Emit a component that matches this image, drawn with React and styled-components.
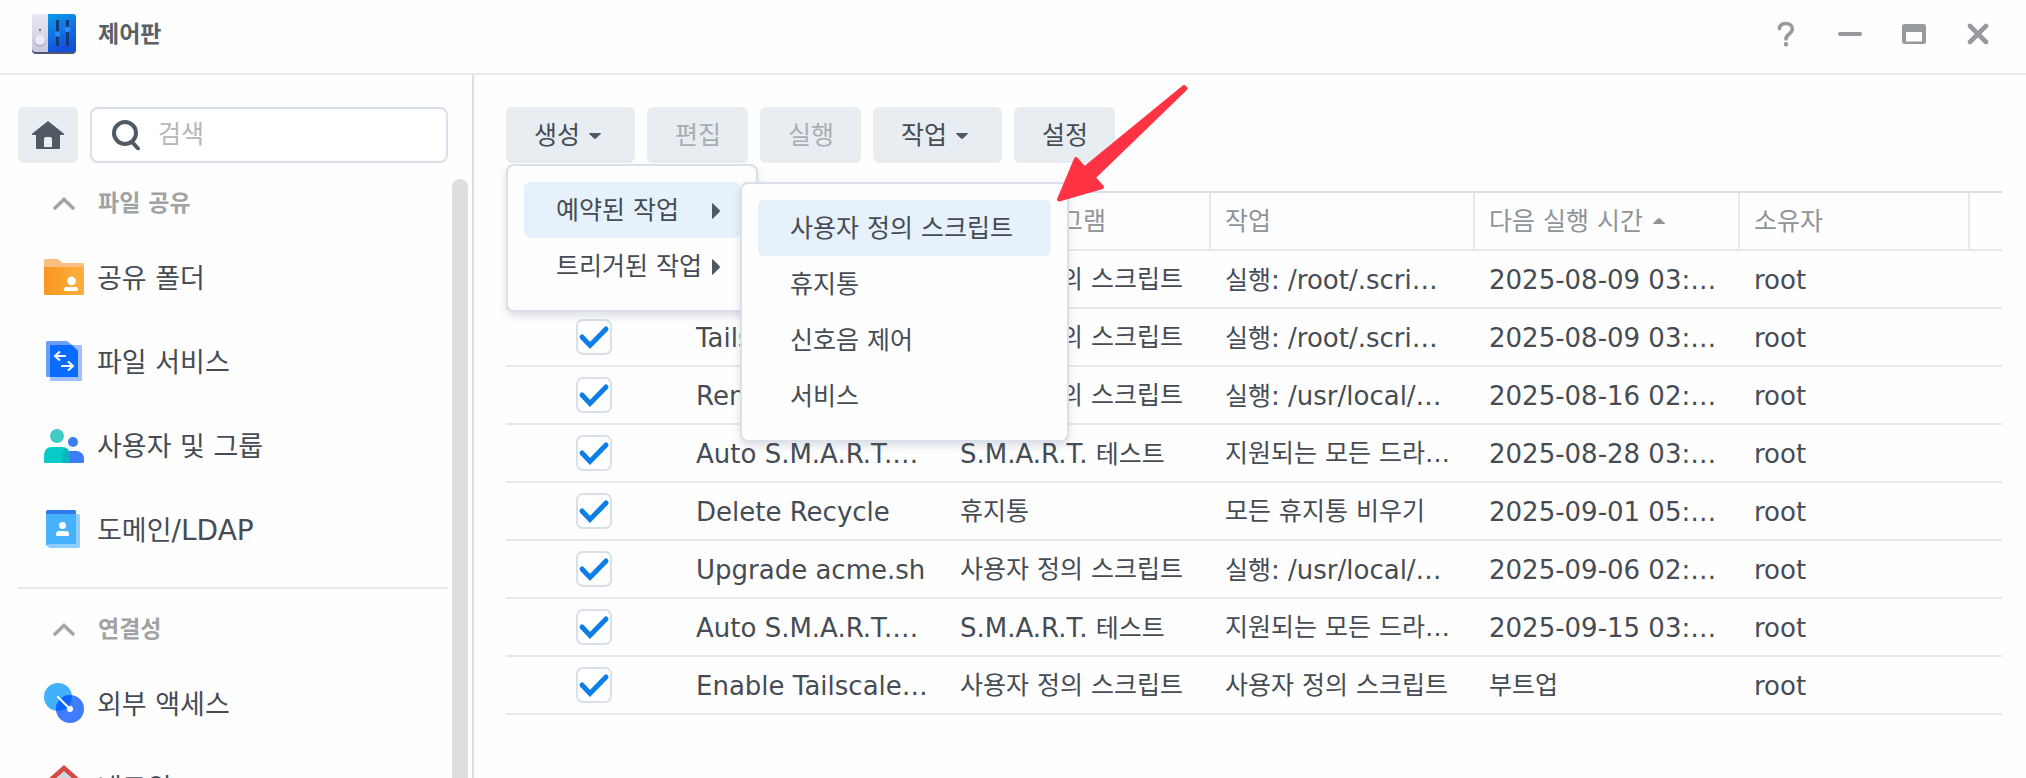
import React, { useState } from 'react';
import styled, { createGlobalStyle } from 'styled-components';

const colors = {
  text: '#454c54',
  icon: '#505a64',
  muted: '#8f9499',
  faint: '#a9adb1',
  control: '#e8edf2',
  border: '#d9e0e9',
  line: '#e6e8eb',
  hover: '#e6f1fc',
  blue: '#0c7fe6',
};

const GlobalStyle = createGlobalStyle`
  * {
    box-sizing: border-box;
  }
  body {
    margin: 0;
    background: #fefefe;
    color: ${colors.text};
    font-family: 'DejaVu Sans', 'Noto Sans CJK KR', sans-serif;
    font-size: 25px;
    line-height: 32px;
  }
  button, input {
    font: inherit;
    color: inherit;
  }
  button {
    border: 0;
    padding: 0;
    background: none;
    cursor: pointer;
  }
  ul {
    list-style: none;
    margin: 0;
    padding: 0;
  }
`;

const Window = styled.div`
  display: flex;
  flex-direction: column;
  height: 100vh;
  overflow: hidden;
`;

const TitleBar = styled.header`
  display: flex;
  align-items: center;
  height: 75px;
  flex-shrink: 0;
  padding: 0 16px 6px 32px;
  border-bottom: 2px solid ${colors.line};
`;

const Title = styled.h1`
  flex: 1;
  margin: 0 0 0 22px;
  font-size: 23px;
  line-height: 32px;
  font-weight: 700;
  color: #5b6066;
`;

const WindowButton = styled.button`
  display: flex;
  align-items: center;
  justify-content: center;
  width: 64px;
  height: 48px;
  color: #969a9f;
`;

const Body = styled.div`
  display: flex;
  flex: 1;
  min-height: 0;
`;

const Sidebar = styled.aside`
  display: flex;
  flex-direction: column;
  width: 474px;
  flex-shrink: 0;
  border-right: 2px solid ${colors.border};
`;

const SearchRow = styled.div`
  display: flex;
  gap: 12px;
  padding: 32px 24px 0 18px;
`;

const HomeButton = styled.button`
  display: flex;
  align-items: center;
  justify-content: center;
  flex-shrink: 0;
  width: 60px;
  height: 56px;
  border-radius: 6px;
  background: ${colors.control};
`;

const SearchBox = styled.label`
  display: flex;
  align-items: center;
  flex: 1;
  min-width: 0;
  gap: 18px;
  height: 56px;
  padding: 0 20px;
  border: 2px solid ${colors.border};
  border-radius: 8px;
  background: #fff;

  svg {
    flex-shrink: 0;
  }
`;

const SearchInput = styled.input`
  flex: 1;
  min-width: 0;
  padding: 0;
  border: 0;
  outline: 0;
  background: none;

  &::placeholder {
    color: #b4b6b8;
    opacity: 1;
  }
`;

const NavArea = styled.div`
  display: flex;
  flex: 1;
  min-height: 0;
  gap: 4px;
  padding: 0 4px 0 18px;
`;

const Nav = styled.nav`
  flex: 1;
  padding-top: 8px;
  overflow: hidden;
`;

const ScrollThumb = styled.div`
  width: 16px;
  margin-top: 16px;
  border-radius: 8px 8px 0 0;
  background: #dedede;
`;

const NavSection = styled.section`
  & + & {
    margin-top: 16px;
    padding-top: 8px;
    border-top: 2px solid #eaeaec;
  }
`;

const SectionButton = styled.button`
  display: flex;
  align-items: center;
  gap: 22px;
  width: 100%;
  height: 64px;
  padding-left: 34px;
  font-size: 23px;
  font-weight: 700;
  color: #a0a2a4;
`;

const NavLink = styled.a`
  display: flex;
  align-items: center;
  gap: 13px;
  height: 84px;
  padding-left: 26px;
  font-size: 27px;
  color: inherit;
  text-decoration: none;
`;

const NavLabel = styled.span`
  padding-top: 3px;
`;

const Main = styled.main`
  flex: 1;
  min-width: 0;
  padding: 32px 24px 0 32px;
`;

const Toolbar = styled.div`
  display: flex;
  gap: 12px;
  margin-bottom: 28px;
`;

const ToolbarItem = styled.div`
  position: relative;
`;

const ToolButton = styled.button`
  display: flex;
  align-items: center;
  gap: 9px;
  height: 56px;
  padding: 2px ${({ $caret }) => ($caret ? '34px' : '27px')} 0 28px;
  border-radius: 6px;
  background: ${colors.control};
  white-space: nowrap;

  &:disabled {
    color: ${colors.faint};
    cursor: default;
  }
`;

const Menu = styled.ul`
  position: absolute;
  z-index: ${({ $nested }) => ($nested ? 3 : 2)};
  top: ${({ $nested }) => ($nested ? '0' : 'calc(100% + 1px)')};
  left: ${({ $nested }) => ($nested ? '100%' : '0')};
  width: ${({ $nested }) => ($nested ? '329px' : '252px')};
  padding: 16px;
  border: 2px solid ${colors.border};
  border-radius: 8px;
  background: #fefefe;
  box-shadow: 0 4px 8px rgba(60, 80, 110, 0.18);
`;

const MenuEntry = styled.li`
  position: relative;
`;

const MenuButton = styled.button`
  display: flex;
  align-items: center;
  justify-content: space-between;
  width: 100%;
  height: 56px;
  padding: 2px 20px 0 32px;
  border-radius: 6px;
  background: ${({ $active }) => ($active ? colors.hover : 'transparent')};
  text-align: left;
  white-space: nowrap;
`;

const Table = styled.table`
  width: 100%;
  table-layout: fixed;
  border-collapse: separate;
  border-spacing: 0;
  border-top: 2px solid #dcdee0;
`;

const HeaderCell = styled.th`
  height: 58px;
  padding: 2px 0 0 14px;
  border-right: ${({ $last }) => ($last ? '0' : `2px solid ${colors.line}`)};
  border-bottom: 2px solid ${colors.line};
  font-weight: 400;
  color: ${colors.muted};
  text-align: left;
  white-space: nowrap;
`;

const SortMark = styled.svg`
  margin-left: 10px;
  vertical-align: 6px;
`;

const Cell = styled.td`
  height: 58px;
  padding: 2px 0 0 14px;
  border-bottom: 2px solid ${colors.line};
  overflow: hidden;
  white-space: nowrap;
`;

const CheckCell = styled(Cell)`
  padding: 0;
`;

const CheckWrapper = styled.label`
  position: relative;
  display: block;
  width: 36px;
  height: 36px;
  margin: 0 auto;

  svg {
    position: absolute;
    inset: 0;
    pointer-events: none;
  }
`;

const CheckInput = styled.input`
  display: block;
  appearance: none;
  width: 36px;
  height: 36px;
  margin: 0;
  border: 2px solid ${colors.border};
  border-radius: 7px;
  background: #fff;

  &:not(:checked) + svg {
    display: none;
  }
`;

const Latin = styled.span`
  font-size: ${({ $large }) => ($large ? '28px' : '26px')};
`;

// lies over the page, so it must not catch clicks
const PointerArrow = styled.svg`
  position: absolute;
  z-index: 5;
  top: 80px;
  left: 1050px;
  pointer-events: none;
`;

// Latin letters are set a little larger than the Hangul beside them
const Text = ({ children, large }) =>
  children
    .split(/([^\u1100-\uffff]*[!-~][^\u1100-\uffff]*…?)/)
    .filter(Boolean)
    .map((part, i) =>
      /[!-~]/.test(part) ? (
        <Latin key={i} $large={large}>
          {part}
        </Latin>
      ) : (
        part
      ),
    );

const AppLogo = () => (
  <svg width="44" height="40" viewBox="0 0 44 40" aria-hidden="true">
    <defs>
      <linearGradient id="panelBlue" x1="0" y1="0" x2="0.3" y2="1">
        <stop offset="0" stopColor="#0c9be8" />
        <stop offset="1" stopColor="#1450dc" />
      </linearGradient>
      <linearGradient id="panelGrey" x1="0" y1="0" x2="0" y2="1">
        <stop offset="0" stopColor="#e9e8f6" />
        <stop offset="1" stopColor="#c9c8dc" />
      </linearGradient>
    </defs>
    <rect y="4" width="44" height="36" rx="4" fill="#4c5878" />
    <path d="M3 0H16V38H4a4 4 0 0 1-4-4V3a3 3 0 0 1 3-3Z" fill="url(#panelGrey)" />
    <path d="M16 0H41a3 3 0 0 1 3 3V34a4 4 0 0 1-4 4H16Z" fill="url(#panelBlue)" />
    <path d="M25.500 6V32M35.500 6V32" stroke="#123c78" strokeWidth="3" />
    <circle cx="25.500" cy="20" r="2.700" fill="#2e8df2" />
    <circle cx="35.500" cy="15.500" r="2.700" fill="#2e8df2" />
    <circle cx="8" cy="16" r="1.200" fill="#777b90" />
    <circle cx="8" cy="27" r="5.500" fill="#adaec4" />
    <circle cx="8" cy="26" r="5" fill="#ebeaf8" />
  </svg>
);

const HelpIcon = () => (
  <svg width="18" height="26" viewBox="0 0 18 26" aria-hidden="true">
    <path
      d="M2.500 7.500C2.800 4 5.500 2.500 9 2.500c3.800 0 6.300 2.200 6.300 5.500 0 5-6.300 5-6.300 10"
      fill="none"
      stroke="currentColor"
      strokeWidth="3.600"
      strokeLinecap="round"
    />
    <circle cx="9" cy="23.200" r="2.200" fill="currentColor" />
  </svg>
);

const MinimizeIcon = () => (
  <svg width="24" height="24" viewBox="0 0 24 24" aria-hidden="true">
    <rect y="10" width="24" height="4" rx="2" fill="currentColor" />
  </svg>
);

const MaximizeIcon = () => (
  <svg width="24" height="20" viewBox="0 0 24 20" aria-hidden="true">
    <path
      fillRule="evenodd"
      d="M2.500 0h19A2.500 2.500 0 0 1 24 2.500v15a2.500 2.500 0 0 1-2.500 2.500h-19A2.500 2.500 0 0 1 0 17.500v-15A2.500 2.500 0 0 1 2.500 0ZM4 8v9.500h16V8Z"
      fill="currentColor"
    />
  </svg>
);

const CloseIcon = () => (
  <svg width="22" height="22" viewBox="0 0 22 22" aria-hidden="true">
    <path d="M3 3 19 19M19 3 3 19" stroke="currentColor" strokeWidth="4.600" strokeLinecap="round" />
  </svg>
);

const HomeIcon = () => (
  <svg width="34" height="28" viewBox="0 0 34 28" fill={colors.icon} aria-hidden="true">
    <path
      fillRule="evenodd"
      d="M17 0 33 12.800q.6.900-.6 1.200H29V27q0 1-1 1H6q-1 0-1-1V14H1.600Q.4 13.700 1 12.800ZM15 16q-2 0-2 2v8h8v-8q0-2-2-2Z"
    />
  </svg>
);

const SearchIcon = () => (
  <svg width="28" height="30" viewBox="0 0 28 30" fill="none" stroke={colors.icon} aria-hidden="true">
    <circle cx="13" cy="13" r="11" strokeWidth="4" />
    <path d="m20.500 22.500 5.500 6" strokeWidth="4" strokeLinecap="round" />
  </svg>
);

const ChevronIcon = () => (
  <svg width="24" height="14" viewBox="0 0 24 14" fill="none" aria-hidden="true">
    <path d="M3 12 12 3.500 21 12" stroke="#a3a5a8" strokeWidth="3.600" strokeLinecap="round" />
  </svg>
);

const CaretDown = () => (
  <svg width="12" height="6" viewBox="0 0 12 6" aria-hidden="true">
    <path d="M.6 0h10.800q1 .2.300 1L7 5.600q-1 .8-2 0L.3 1Q-.4.200.600 0Z" fill={colors.icon} />
  </svg>
);

const CaretRight = () => (
  <svg width="8" height="16" viewBox="0 0 8 16" aria-hidden="true">
    <path d="M0 .8Q0-.3 1 .4L7.500 7q.8 1 0 2L1 15.600q-1 .7-1-.4Z" fill={colors.icon} />
  </svg>
);

const FolderIcon = () => (
  <svg width="40" height="40" viewBox="0 0 40 40" aria-hidden="true">
    <defs>
      <linearGradient id="folder" x1="0" y1="0" x2="1" y2="0">
        <stop offset="0" stopColor="#f8961f" />
        <stop offset="1" stopColor="#fbb040" />
      </linearGradient>
    </defs>
    <path d="M1.500 2H13q2 0 3 1.500L18 6H38.500Q40 6 40 7.500V13H0V3.500Q0 2 1.500 2Z" fill="#f9be82" />
    <path d="M0 10H40V36.500q0 1.500-1.500 1.500h-37Q0 38 0 36.500Z" fill="url(#folder)" />
    <circle cx="27.500" cy="24" r="4.400" fill="#fff" />
    <path d="M20 33v-1q0-2 2-2H32q2 0 2 2v1q0 1-1 1H21q-1 0-1-1Z" fill="#fff" />
  </svg>
);

const FileServiceIcon = () => (
  <svg width="40" height="40" viewBox="0 0 40 40" aria-hidden="true">
    <path d="M6 4H36.500Q38 4 38 5.500V38.500Q38 40 36.500 40H7.500Q6 40 6 38.500Z" fill="#a3bffa" />
    <path d="M3.500 0H23L34 9V36H3.500Q2 36 2 34.500V1.500Q2 0 3.500 0Z" fill="#6c9df8" />
    <path d="M6 4H28l6 6V36H6Z" fill="#0a6cff" />
    <path
      d="M22 15H11m5-4.500L11 15l5 4.500M17 25H29m-5-4.500L29 25l-5 4.500"
      fill="none"
      stroke="#fff"
      strokeWidth="2"
    />
  </svg>
);

const UsersIcon = () => (
  <svg width="40" height="40" viewBox="0 0 40 40" aria-hidden="true">
    <circle cx="29" cy="17" r="5" fill="#3c7df8" />
    <path d="M20 26H33q7 1 7 8v2.500q0 1.500-1.500 1.500H20Z" fill="#3d7bfa" />
    <circle cx="13" cy="11" r="7" fill="#3fcac2" />
    <path d="M8 22H18q8 0 8 9v7H1.500Q0 38 0 36.500V31q0-9 8-9Z" fill="#06cbc6" />
    <path d="M21 23q5 2 5 8v7H18q-1-10 3-15Z" fill="#08b8bd" />
  </svg>
);

const DomainIcon = () => (
  <svg width="40" height="40" viewBox="0 0 40 40" aria-hidden="true">
    <rect x="4" y="5" width="32" height="34" rx="2" fill="#8fcdff" />
    <path d="M4 1H31Q32 1 32 2.500V12H2V3Q2 1 4 1Z" fill="#2f7dec" />
    <path d="M2 5H32V35H5q-2 0-2 2.500Q2 37 2 35Z" fill="#46b1fd" />
    <circle cx="18.500" cy="16.500" r="3.500" fill="#fff" />
    <path d="M12 26v-1q0-3 3-3h7q3 0 3 3v1q0 1-1 1H13q-1 0-1-1Z" fill="#fff" />
  </svg>
);

const AccessIcon = () => (
  <svg width="40" height="40" viewBox="0 0 40 40" aria-hidden="true">
    <defs>
      <clipPath id="accessBack">
        <circle cx="14" cy="14" r="14" />
      </clipPath>
    </defs>
    <circle cx="14" cy="14" r="14" fill="#42b0fb" />
    <circle cx="26" cy="26" r="14" fill="#3f7dfc" />
    <circle cx="26" cy="26" r="14" fill="#0a67fb" clipPath="url(#accessBack)" />
    <path d="M14 14 26 26" stroke="#fff" strokeWidth="2" strokeLinecap="round" />
    <circle cx="26" cy="26" r="3" fill="#fff" />
  </svg>
);

const NetworkIcon = () => (
  <svg width="40" height="40" viewBox="0 0 40 40" overflow="visible" aria-hidden="true">
    <path d="M6 15 20 2 34 15V36q0 2-2 2H8q-2 0-2-2Z" fill="#d3d5d8" />
    <path d="M3 16 20 1 37 16" fill="none" stroke="#d34a45" strokeWidth="4.500" />
  </svg>
);

const CheckIcon = () => (
  <svg width="36" height="36" viewBox="0 0 36 36" fill="none" aria-hidden="true">
    <path d="m6 18 8 8.500L30 10" stroke={colors.blue} strokeWidth="5" strokeLinecap="round" />
  </svg>
);

const sections = [
  {
    title: '파일 공유',
    items: [
      { label: '공유 폴더', Icon: FolderIcon },
      { label: '파일 서비스', Icon: FileServiceIcon },
      { label: '사용자 및 그룹', Icon: UsersIcon },
      { label: '도메인/LDAP', Icon: DomainIcon },
    ],
  },
  {
    title: '연결성',
    items: [
      { label: '외부 액세스', Icon: AccessIcon },
      { label: '네트워크', Icon: NetworkIcon },
    ],
  },
];

const windowButtons = [
  { label: '도움말', Icon: HelpIcon },
  { label: '최소화', Icon: MinimizeIcon },
  { label: '최대화', Icon: MaximizeIcon },
  { label: '닫기', Icon: CloseIcon },
];

const scheduledItems = ['사용자 정의 스크립트', '휴지통', '신호음 제어', '서비스'];

const columns = [
  { title: '활성화됨', width: 176 },
  { title: '작업', width: 264 },
  { title: '응용 프로그램', width: 265 },
  { title: '작업', width: 264 },
  { title: '다음 실행 시간', width: 265, sorted: true },
  { title: '소유자', width: 230 },
  { title: '' },
];

const script = '사용자 정의 스크립트';
const smart = 'S.M.A.R.T. 테스트';

const tasks = [
  ['Tailscale', script, '실행: /root/.scri…', '2025-08-09 03:…'],
  ['Tailscale', script, '실행: /root/.scri…', '2025-08-09 03:…'],
  ['Renew', script, '실행: /usr/local/…', '2025-08-16 02:…'],
  ['Auto S.M.A.R.T.…', smart, '지원되는 모든 드라…', '2025-08-28 03:…'],
  ['Delete Recycle', '휴지통', '모든 휴지통 비우기', '2025-09-01 05:…'],
  ['Upgrade acme.sh', script, '실행: /usr/local/…', '2025-09-06 02:…'],
  ['Auto S.M.A.R.T.…', smart, '지원되는 모든 드라…', '2025-09-15 03:…'],
  ['Enable Tailscale…', script, script, '부트업'],
];

const TaskRow = ({ task, checked, onToggle }) => (
  <tr>
    <CheckCell>
      <CheckWrapper>
        <CheckInput type="checkbox" aria-label={task[0]} checked={checked} onChange={onToggle} />
        <CheckIcon />
      </CheckWrapper>
    </CheckCell>
    {[...task, 'root'].map((value, i) => (
      <Cell key={i}>
        <Text>{value}</Text>
      </Cell>
    ))}
    <Cell />
  </tr>
);

const App = () => {
  const [enabled, setEnabled] = useState(tasks.map(() => true));
  const [isMenuOpen, setIsMenuOpen] = useState(true);

  const handleToggle = (index) => {
    setEnabled(enabled.map((value, i) => (i === index ? !value : value)));
  };

  return (
    <Window>
      <GlobalStyle />
      <TitleBar>
        <AppLogo />
        <Title>제어판</Title>
        {windowButtons.map(({ label, Icon }) => (
          <WindowButton key={label} type="button" aria-label={label}>
            <Icon />
          </WindowButton>
        ))}
      </TitleBar>
      <Body>
        <Sidebar>
          <SearchRow>
            <HomeButton type="button" aria-label="홈">
              <HomeIcon />
            </HomeButton>
            <SearchBox>
              <SearchIcon />
              <SearchInput type="text" placeholder="검색" aria-label="검색" />
            </SearchBox>
          </SearchRow>
          <NavArea>
            <Nav>
              {sections.map(({ title, items }) => (
                <NavSection key={title}>
                  <SectionButton type="button">
                    <ChevronIcon />
                    {title}
                  </SectionButton>
                  {items.map(({ label, Icon }) => (
                    <NavLink key={label} href="#">
                      <Icon />
                      <NavLabel>
                        <Text large>{label}</Text>
                      </NavLabel>
                    </NavLink>
                  ))}
                </NavSection>
              ))}
            </Nav>
            <ScrollThumb />
          </NavArea>
        </Sidebar>
        <Main>
          <Toolbar>
            <ToolbarItem>
              <ToolButton type="button" $caret onClick={() => setIsMenuOpen(!isMenuOpen)}>
                생성
                <CaretDown />
              </ToolButton>
              {isMenuOpen ? (
                <Menu>
                  <MenuEntry>
                    <MenuButton type="button" $active>
                      예약된 작업
                      <CaretRight />
                    </MenuButton>
                    <Menu $nested>
                      {scheduledItems.map((label, i) => (
                        <MenuEntry key={label}>
                          <MenuButton type="button" $active={i === 0}>
                            {label}
                          </MenuButton>
                        </MenuEntry>
                      ))}
                    </Menu>
                  </MenuEntry>
                  <MenuEntry>
                    <MenuButton type="button">
                      트리거된 작업
                      <CaretRight />
                    </MenuButton>
                  </MenuEntry>
                </Menu>
              ) : null}
            </ToolbarItem>
            <ToolButton type="button" disabled>
              편집
            </ToolButton>
            <ToolButton type="button" disabled>
              실행
            </ToolButton>
            <ToolButton type="button" $caret>
              작업
              <CaretDown />
            </ToolButton>
            <ToolButton type="button">설정</ToolButton>
          </Toolbar>
          <Table>
            <colgroup>
              {columns.map(({ width }, i) => (
                <col key={i} width={width} />
              ))}
            </colgroup>
            <thead>
              <tr>
                {columns.map(({ title, sorted }, i) => (
                  <HeaderCell key={i} scope="col" $last={i === columns.length - 1}>
                    {title}
                    {sorted ? (
                      <SortMark width="12" height="6" viewBox="0 0 12 6" aria-hidden="true">
                        <path d="M.6 6h10.800q1-.2.300-1L7 .4Q6-.4 5 .4L.3 5Q-.4 5.800.600 6Z" fill={colors.muted} />
                      </SortMark>
                    ) : null}
                  </HeaderCell>
                ))}
              </tr>
            </thead>
            <tbody>
              {tasks.map((task, i) => (
                <TaskRow key={i} task={task} checked={enabled[i]} onToggle={() => handleToggle(i)} />
              ))}
            </tbody>
          </Table>
        </Main>
      </Body>
      <PointerArrow width="140" height="126" viewBox="0 0 140 126" aria-hidden="true">
        <path
          d="M9 119.500 26 79 34.500 88.500 134 7 135.500 8.500 43.500 97.500 52 107Z"
          fill="#ff3344"
          stroke="#ff3344"
          strokeWidth="4"
          strokeLinejoin="round"
        />
      </PointerArrow>
    </Window>
  );
};

export default App;
